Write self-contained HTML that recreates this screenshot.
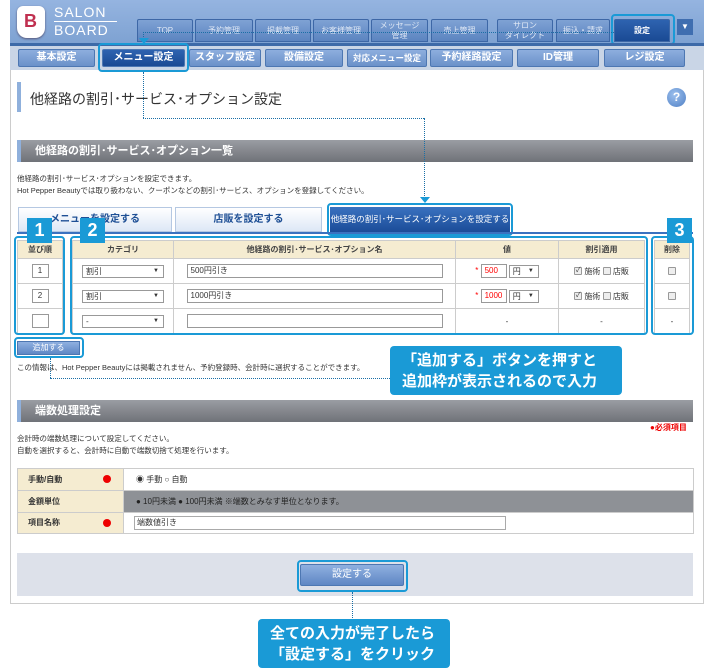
<!DOCTYPE html>
<html><head><meta charset="utf-8"><style>
*{box-sizing:border-box;margin:0;padding:0}
body{width:710px;height:670px;background:#fff;position:relative;overflow:hidden;font-family:"Liberation Sans","Noto Sans CJK JP",sans-serif;color:#333}
.a{position:absolute}
.hdr{left:10px;top:0;width:694px;height:43px;background:linear-gradient(#95b4e0,#7ea2d2)}
.tb{position:absolute;top:19px;height:23px;background:linear-gradient(#7fa2d4,#5b84c0);border:1px solid #3d67a6;color:#dfe8f5;font-size:8px;text-align:center;line-height:22px;border-radius:2px 2px 0 0}
.nav2{left:10px;top:43px;width:694px;height:27px;background:#c9d5e6;border-top:3px solid #3d6aa8}
.nb{position:absolute;top:49px;height:18px;background:linear-gradient(#8daede,#6b91c9);border:1px solid #4d77b2;color:#fff;font-size:10px;font-weight:bold;text-align:center;line-height:16px;border-radius:2px}
.hl{position:absolute;border:2px solid #1a9ad6;border-radius:4px}
.dot{position:absolute;border:0 dotted #1a6fa6}
.bar{position:absolute;left:17px;width:676px;height:22px;background:linear-gradient(#9a9da3,#6f7278);border-left:4px solid #8fb0dc;color:#fff;font-weight:bold;font-size:11px;line-height:22px;padding-left:14px}
.sm{font-size:7.5px;color:#333}
.badge{position:absolute;width:25px;height:25px;background:#1a9ad6;color:#fff;font-weight:bold;font-size:18px;text-align:center;line-height:25px}
table{border-collapse:collapse;font-size:8px}
td,th{border:1px solid #ccc;text-align:center}
th{background:#f5ecd1;font-weight:bold;height:18px;color:#444}
td{height:25px}
.in{display:inline-block;border:1px solid #999;background:#fff;height:14px;vertical-align:middle;font-size:8px;text-align:left;padding-left:3px;line-height:12px}
.sel{display:inline-block;border:1px solid #999;background:#fff;height:13px;vertical-align:middle;font-size:8px;text-align:left;padding-left:3px;line-height:11px;position:relative}
.sel:after{content:"▼";position:absolute;right:4px;font-size:6px}
.cb{display:inline-block;width:8px;height:8px;border:1px solid #999;background:#eee;vertical-align:middle;border-radius:1px;font-size:7px;line-height:6px}
.call{position:absolute;background:#1a9ad6;color:#fff;font-weight:bold;font-size:15px;line-height:21px;border-radius:4px;padding:4px 12px}
.lab{position:absolute;left:10px;font-weight:bold;line-height:21px}
</style></head><body>
<div class="a hdr"></div>
<div class="a" style="left:17px;top:6px;width:28px;height:32px;background:#fff;border-radius:6px 6px 10px 10px;box-shadow:0 1px 2px #557"></div>
<div class="a" style="left:24px;top:11px;font-size:18px;font-weight:bold;color:#c03050;line-height:20px">B</div>
<div class="a" style="left:54px;top:5px;color:#fff;font-size:14px;letter-spacing:1px;line-height:15px">SALON</div>
<div class="a" style="left:54px;top:21px;width:63px;border-top:1px solid #fff"></div>
<div class="a" style="left:54px;top:23px;color:#fff;font-size:14px;letter-spacing:1px;line-height:15px">BOARD</div>
<div class="tb" style="left:137px;width:56px">TOP</div>
<div class="tb" style="left:195px;width:58px">予約管理</div>
<div class="tb" style="left:255px;width:56px">掲載管理</div>
<div class="tb" style="left:313px;width:56px">お客様管理</div>
<div class="tb" style="left:371px;width:57px;line-height:10px;padding-top:1px">メッセージ<br>管理</div>
<div class="tb" style="left:431px;width:57px">売上管理</div>
<div class="tb" style="left:497px;width:56px;line-height:10px;padding-top:1px">サロン<br>ダイレクト</div>
<div class="tb" style="left:556px;width:54px">振込・請求</div>
<div class="tb" style="left:614px;width:56px;background:linear-gradient(#2e63b0,#1a4a94);color:#fff;font-weight:bold">設定</div>
<div class="hl" style="left:611px;top:14px;width:64px;height:31px"></div>
<div class="a" style="left:677px;top:19px;width:16px;height:16px;background:#3f6eb0;color:#fff;font-size:8px;text-align:center;line-height:16px">▼</div>
<div class="a nav2"></div>
<div class="nb" style="left:18px;width:77px">基本設定</div>
<div class="nb" style="left:102px;width:83px;background:linear-gradient(#2e63b0,#1a4a94)">メニュー設定</div>
<div class="nb" style="left:189px;width:72px">スタッフ設定</div>
<div class="nb" style="left:265px;width:78px">設備設定</div>
<div class="nb" style="left:347px;width:80px;font-size:8.5px">対応メニュー設定</div>
<div class="nb" style="left:430px;width:83px">予約経路設定</div>
<div class="nb" style="left:517px;width:82px">ID管理</div>
<div class="nb" style="left:604px;width:81px">レジ設定</div>
<div class="hl" style="left:98px;top:43px;width:91px;height:29px"></div>
<div class="a" style="left:10px;top:70px;width:694px;height:534px;border:1px solid #ccc;border-top:0"></div>
<div class="a" style="left:17px;top:82px;width:4px;height:30px;background:#8fb0dc"></div>
<div class="a" style="left:30px;top:89px;font-size:14px;color:#333">他経路の割引･サービス･オプション設定</div>
<div class="a" style="left:667px;top:88px;width:19px;height:19px;border-radius:50%;background:radial-gradient(circle at 40% 35%,#9cc0ee,#4f7fc4);color:#fff;font-weight:bold;font-size:12px;text-align:center;line-height:19px">?</div>
<div class="bar" style="top:140px">他経路の割引･サービス･オプション一覧</div>
<div class="a sm" style="left:17px;top:173px">他経路の割引･サービス･オプションを設定できます。</div>
<div class="a sm" style="left:17px;top:185px">Hot Pepper Beautyでは取り扱わない、クーポンなどの割引･サービス、オプションを登録してください。</div>
<div class="a" style="left:18px;top:207px;width:154px;height:25px;background:linear-gradient(#fff,#dde8f6);border:1px solid #b5c8e2;color:#1e4f95;font-weight:bold;font-size:10px;text-align:center;line-height:24px">メニューを設定する</div>
<div class="a" style="left:175px;top:207px;width:147px;height:25px;background:linear-gradient(#fff,#dde8f6);border:1px solid #b5c8e2;color:#1e4f95;font-weight:bold;font-size:10px;text-align:center;line-height:24px">店販を設定する</div>
<div class="a" style="left:330px;top:207px;width:180px;height:25px;background:linear-gradient(#3a72c0,#1b4c98);color:#fff;font-size:8.5px;text-align:center;line-height:24px">他経路の割引･サービス･オプションを設定する</div>
<div class="hl" style="left:327px;top:203px;width:186px;height:33px"></div>
<div class="a" style="left:17px;top:232px;width:676px;height:2px;background:#3a72c0"></div>
<table class="a" style="left:17px;top:240px;width:46px"><tr><th>並び順</th></tr>
<tr><td><span class="in" style="width:17px;text-align:center;padding:0">1</span></td></tr>
<tr><td><span class="in" style="width:17px;text-align:center;padding:0">2</span></td></tr>
<tr><td><span class="in" style="width:17px"></span></td></tr></table>
<table class="a" style="left:72px;top:240px;width:573px"><tr><th style="width:101px">カテゴリ</th><th style="width:282px">他経路の割引･サービス･オプション名</th><th style="width:103px">値</th><th>割引適用</th></tr>
<tr><td><span class="sel" style="width:82px">割引</span></td><td><span class="in" style="width:256px">500円引き</span></td><td><span style="color:red">*</span> <span class="in" style="width:26px;color:red">500</span> <span class="sel" style="width:30px">円</span></td><td><span class="cb">✓</span> 施術 <span class="cb"></span> 店販</td></tr>
<tr><td><span class="sel" style="width:82px">割引</span></td><td><span class="in" style="width:256px">1000円引き</span></td><td><span style="color:red">*</span> <span class="in" style="width:26px;color:red">1000</span> <span class="sel" style="width:30px">円</span></td><td><span class="cb">✓</span> 施術 <span class="cb"></span> 店販</td></tr>
<tr><td><span class="sel" style="width:82px">-</span></td><td><span class="in" style="width:256px"></span></td><td>-</td><td>-</td></tr></table>
<table class="a" style="left:654px;top:240px;width:36px"><tr><th>削除</th></tr>
<tr><td><span class="cb"></span></td></tr><tr><td><span class="cb"></span></td></tr><tr><td>-</td></tr></table>
<div class="hl" style="left:14px;top:236px;width:51px;height:99px"></div>
<div class="hl" style="left:70px;top:236px;width:578px;height:99px"></div>
<div class="hl" style="left:651px;top:236px;width:43px;height:99px"></div>
<div class="badge" style="left:27px;top:218px">1</div>
<div class="badge" style="left:80px;top:218px">2</div>
<div class="badge" style="left:667px;top:218px">3</div>
<div class="a" style="left:17px;top:341px;width:63px;height:14px;background:linear-gradient(#8fb0e0,#5f87c4);border:1px solid #4d77b2;color:#fff;font-size:8px;text-align:center;line-height:12px">追加する</div>
<div class="hl" style="left:14px;top:337px;width:70px;height:21px"></div>
<div class="a sm" style="left:17px;top:362px">この情報は、Hot Pepper Beautyには掲載されません、予約登録時、会計時に選択することができます。</div>
<div class="call" style="left:390px;top:346px;width:232px;height:49px">「追加する」ボタンを押すと<br>追加枠が表示されるので入力</div>
<div class="dot" style="left:143px;top:32px;width:471px;border-top-width:1px"></div>
<div class="dot" style="left:143px;top:32px;height:7px;border-left-width:1px"></div>
<div class="a" style="left:139px;top:38px;border:5px solid transparent;border-top:6px solid #1a9ad6"></div>
<div class="dot" style="left:143px;top:72px;height:46px;border-left-width:1px"></div>
<div class="dot" style="left:143px;top:118px;width:281px;border-top-width:1px"></div>
<div class="dot" style="left:424px;top:118px;height:80px;border-left-width:1px"></div>
<div class="a" style="left:420px;top:197px;border:5px solid transparent;border-top:6px solid #1a9ad6"></div>
<div class="dot" style="left:50px;top:358px;height:20px;border-left-width:1px"></div>
<div class="dot" style="left:50px;top:378px;width:340px;border-top-width:1px"></div>
<div class="bar" style="top:400px">端数処理設定</div>
<div class="a" style="left:650px;top:422px;color:#e00;font-size:8px;font-weight:bold">●必須項目</div>
<div class="a sm" style="left:17px;top:433px">会計時の端数処理について設定してください。</div>
<div class="a sm" style="left:17px;top:445px">自動を選択すると、会計時に自動で端数切捨て処理を行います。</div>
<div class="a" style="left:17px;top:468px;width:677px;height:66px;border:1px solid #ccc;font-size:8px">
<div class="a" style="left:0;top:0;width:106px;height:64px;background:#f5ecd1;border-right:1px solid #ccc"></div>
<div class="a" style="left:106px;top:22px;width:569px;height:22px;background:#8e9196"></div>
<div class="a" style="left:0;top:21px;width:675px;border-top:1px solid #ccc"></div>
<div class="a" style="left:0;top:43px;width:675px;border-top:1px solid #ccc"></div>
<div class="lab" style="top:0">手動/自動</div><div class="a" style="left:85px;top:6px;width:8px;height:8px;border-radius:50%;background:#e00"></div>
<div class="lab" style="top:22px">金額単位</div>
<div class="lab" style="top:43px">項目名称</div><div class="a" style="left:85px;top:50px;width:8px;height:8px;border-radius:50%;background:#e00"></div>
<div class="a" style="left:118px;top:0;line-height:21px">◉ 手動 ○ 自動</div>
<div class="a" style="left:118px;top:22px;line-height:21px;color:#222">● 10円未満 ● 100円未満 ※端数とみなす単位となります。</div>
<div class="a" style="left:116px;top:47px;width:372px;height:14px;border:1px solid #aaa;background:#fff;padding-left:2px;line-height:12px">端数値引き</div>
</div>
<div class="a" style="left:17px;top:553px;width:676px;height:43px;background:#dde1ea"></div>
<div class="a" style="left:300px;top:564px;width:104px;height:22px;background:linear-gradient(#8fb0e0,#5f87c4);border:1px solid #4d77b2;color:#fff;font-size:10px;text-align:center;line-height:20px;border-radius:2px">設定する</div>
<div class="hl" style="left:297px;top:560px;width:111px;height:32px"></div>
<div class="dot" style="left:352px;top:592px;height:26px;border-left-width:1px"></div>
<div class="call" style="left:258px;top:619px;width:192px;height:49px">全ての入力が完了したら<br>「設定する」をクリック</div>
</body></html>
